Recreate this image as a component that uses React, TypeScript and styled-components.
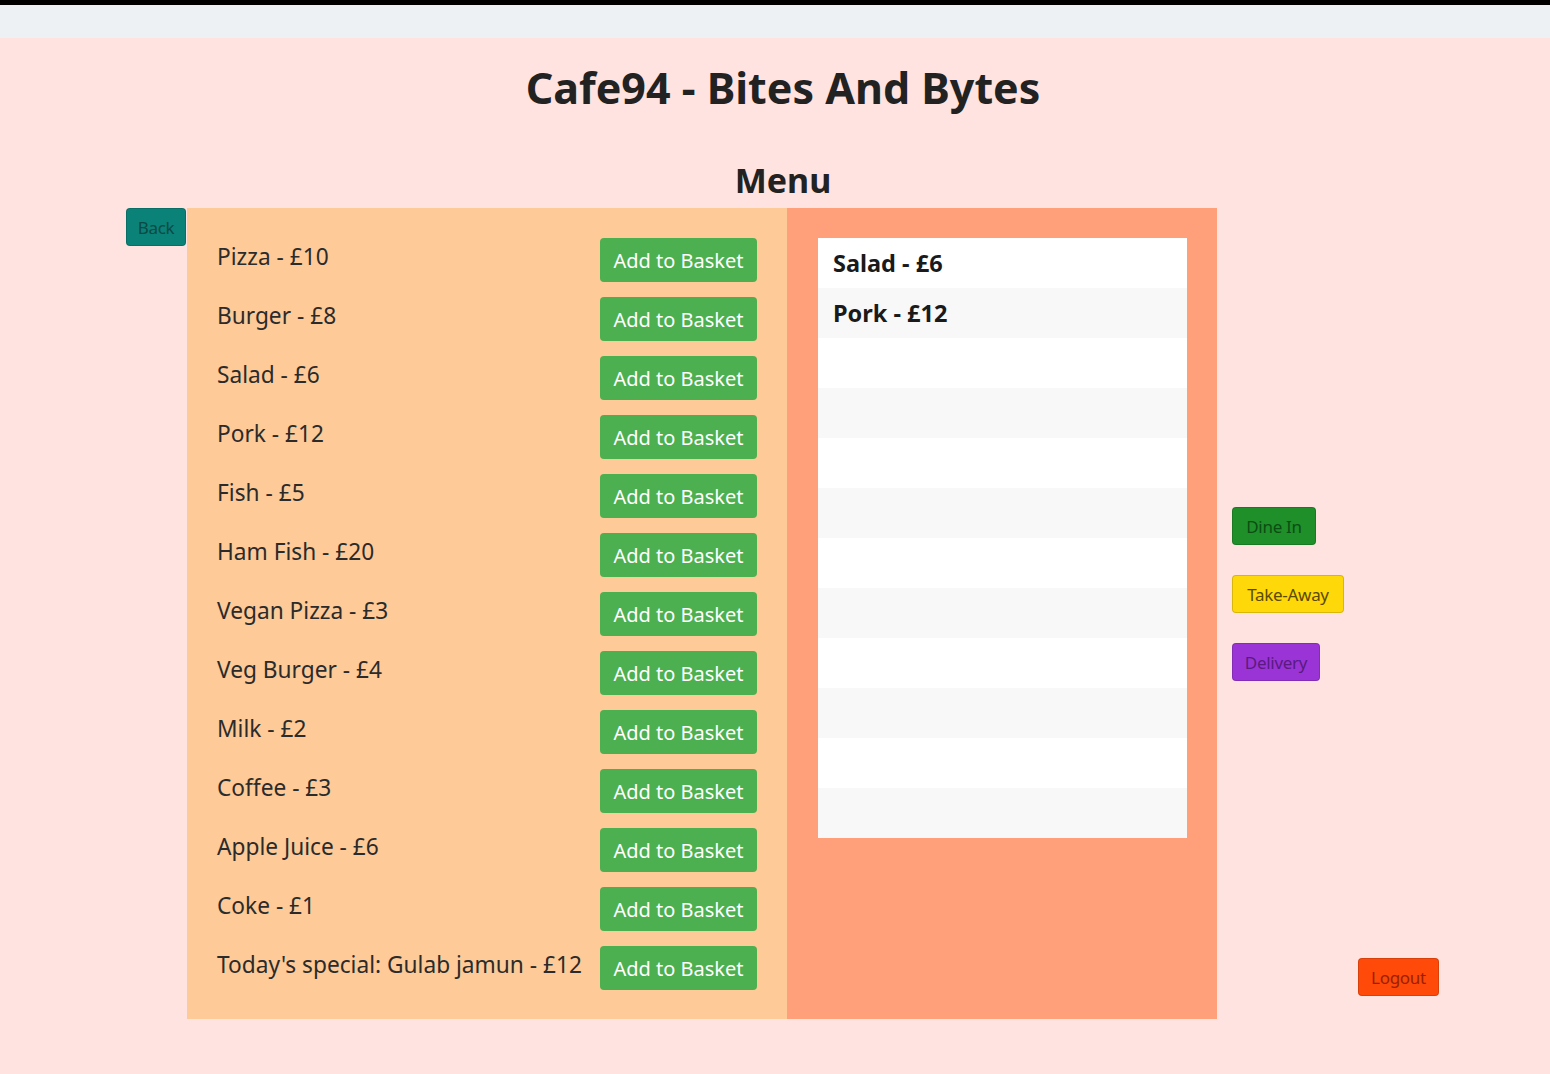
import React, { useState } from 'react'
import styled, { createGlobalStyle } from 'styled-components';

const GlobalStyle = createGlobalStyle`
    html, body {
        margin: 0;
        padding: 0;
        background-color: #ffe3e0;
        font-family: "Noto Sans", "Open Sans", sans-serif;
    }
`;

const Page = styled.div`
    min-height: 1074px;
    background-color: #ffe3e0;
    border-top: 5px solid #000;
    box-sizing: border-box;
`;

const BrowserStrip = styled.div`
    height: 33px;
    background-color: #eef1f4;
`;

const Title = styled.h1`
    margin: 25px 0 0;
    padding-left: 16px;
    text-align: center;
    font-size: 43px;
    line-height: 50px;
    font-weight: 700;
    color: #222;
`;

const SubTitle = styled.h2`
    margin: 47px 0 8px;
    padding-left: 16px;
    text-align: center;
    font-size: 34px;
    line-height: 40px;
    font-weight: 700;
    color: #222;
`;

const Main = styled.div`
    display: flex;
    align-items: stretch;
    padding-left: 126px;
`;

const SmallButton = styled.button<{ $bg: string; $fg: string; $w: number }>`
    font-family: "Noto Sans", sans-serif;
    font-size: 17px;
    letter-spacing: -0.3px;
    padding: 0 8px;
    height: 38px;
    width: ${p => p.$w}px;
    border: 1px solid rgba(0, 0, 0, 0.15);
    border-radius: 4px;
    background-color: ${p => p.$bg};
    color: ${p => p.$fg};
    cursor: pointer;
`;

const BackButton = styled(SmallButton)`
    align-self: flex-start;
    margin-right: 1px;
`;

const MenuPanel = styled.div`
    width: 600px;
    box-sizing: border-box;
    background-color: #fdca98;
    padding: 30px 30px 29px;
    display: flex;
    flex-direction: column;
    gap: 15px;
`;

const MenuRow = styled.div`
    display: flex;
    justify-content: space-between;
    align-items: center;
`;

const ItemName = styled.span`
    font-size: 22.7px;
    color: #2b2b2b;
    margin-top: -8px;
`;

const AddButton = styled.button`
    font-family: "Noto Sans", sans-serif;
    font-size: 20px;
    color: #fff;
    background-color: #4caf50;
    border: none;
    border-radius: 4px;
    width: 157px;
    height: 44px;
    cursor: pointer;
`;

const BasketPanel = styled.div`
    width: 430px;
    box-sizing: border-box;
    background-color: #ffa07a;
    padding: 30px 30px 0 31px;
`;

const BasketList = styled.ul`
    list-style: none;
    margin: 0;
    padding: 0;
    background-color: #fff;
    width: 369px;
`;

const BasketItem = styled.li<{ $odd: boolean }>`
    height: 50px;
    line-height: 50px;
    padding-left: 15px;
    font-size: 23.5px;
    font-weight: 700;
    color: #1a1a1a;
    background-color: ${p => (p.$odd ? '#f8f8f8' : '#fff')};
`;

const OrderColumn = styled.div`
    display: flex;
    flex-direction: column;
    align-items: flex-start;
    gap: 30px;
    margin-left: 15px;
    padding-top: 299px;
    width: 126px;
`;

const LogoutColumn = styled.div`
    display: flex;
    align-items: flex-end;
    padding-bottom: 23px;
`;

const menuItems = [
    { name: 'Pizza', price: 10 },
    { name: 'Burger', price: 8 },
    { name: 'Salad', price: 6 },
    { name: 'Pork', price: 12 },
    { name: 'Fish', price: 5 },
    { name: 'Ham Fish', price: 20 },
    { name: 'Vegan Pizza', price: 3 },
    { name: 'Veg Burger', price: 4 },
    { name: 'Milk', price: 2 },
    { name: 'Coffee', price: 3 },
    { name: 'Apple Juice', price: 6 },
    { name: 'Coke', price: 1 },
    { name: "Today's special: Gulab jamun", price: 12 },
];

export default function App() {
    const [basket, setBasket] = useState([
        { name: 'Salad', price: 6 },
        { name: 'Pork', price: 12 },
    ]);

    const addHandler = (item: { name: string; price: number }) => {
        setBasket(prev => [...prev, item]);
    };

    const rows = Array.from({ length: 12 }, (_, i) => basket[i]);

    return (
        <>
            <GlobalStyle />
            <Page>
                <BrowserStrip />
                <Title>Cafe94 - Bites And Bytes</Title>
                <SubTitle>Menu</SubTitle>
                <Main>
                    <BackButton $bg="#0b8278" $fg="#0a4a44" $w={60}>Back</BackButton>
                    <MenuPanel>
                        {menuItems.map(item => (
                            <MenuRow key={item.name}>
                                <ItemName>{item.name} - £{item.price}</ItemName>
                                <AddButton onClick={() => addHandler(item)}>Add to Basket</AddButton>
                            </MenuRow>
                        ))}
                    </MenuPanel>
                    <BasketPanel>
                        <BasketList>
                            {rows.map((item, i) => (
                                <BasketItem key={i} $odd={i % 2 === 1}>
                                    {item ? `${item.name} - £${item.price}` : ''}
                                </BasketItem>
                            ))}
                        </BasketList>
                    </BasketPanel>
                    <OrderColumn>
                        <SmallButton $bg="#1f8f2a" $fg="#0b4d12" $w={84}>Dine In</SmallButton>
                        <SmallButton $bg="#ffd80a" $fg="#5a4a00" $w={112}>Take-Away</SmallButton>
                        <SmallButton $bg="#9a34d6" $fg="#5a1a80" $w={88}>Delivery</SmallButton>
                    </OrderColumn>
                    <LogoutColumn>
                        <SmallButton $bg="#ff4a0a" $fg="#9a2000" $w={81}>Logout</SmallButton>
                    </LogoutColumn>
                </Main>
            </Page>
        </>
    );
}
